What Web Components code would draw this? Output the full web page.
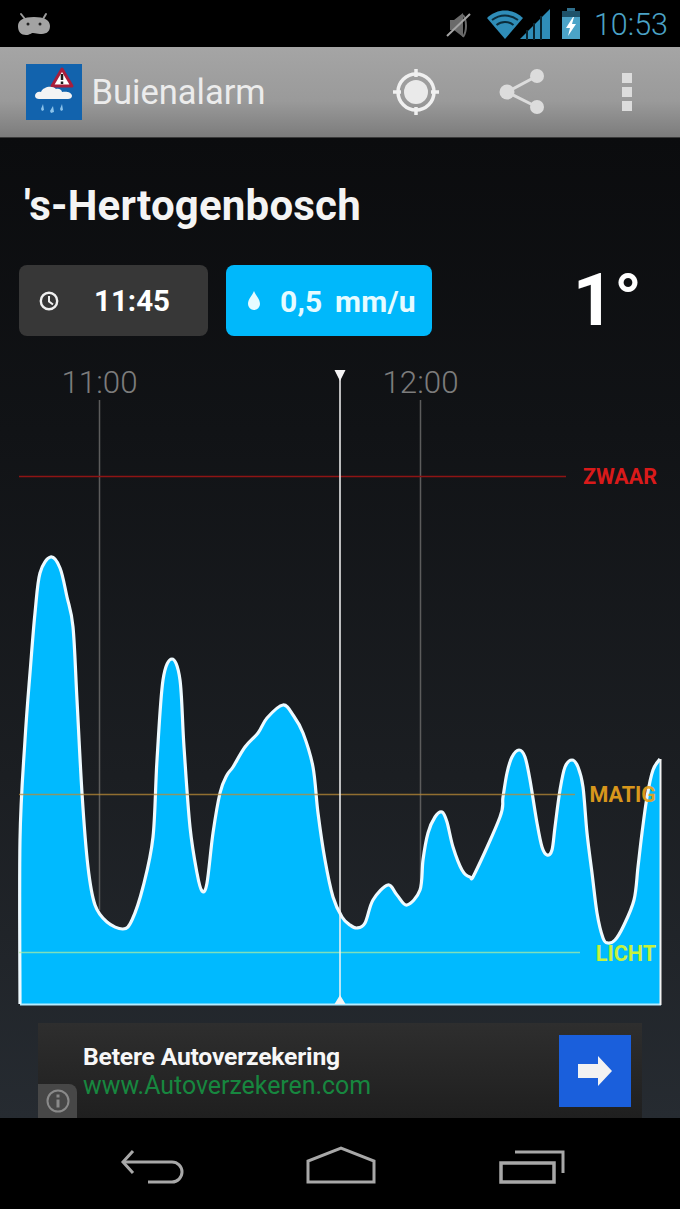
<!DOCTYPE html>
<html>
<head>
<meta charset="utf-8">
<title>Buienalarm</title>
<style>
  html, body { margin: 0; padding: 0; background: #000; }
  body { width: 680px; height: 1209px; overflow: hidden; font-family: Roboto, "Liberation Sans", sans-serif; }
</style>
</head>
<body>
<app-screen>
  <status-bar slot="status" time="10:53"></status-bar>
  <action-bar slot="action" title="Buienalarm"></action-bar>
  <city-title city="'s-Hertogenbosch"></city-title>
  <info-row time="11:45" rain="0,5 mm/u" temp="1°"></info-row>
  <rain-chart></rain-chart>
  <ad-banner slot="ad" headline="Betere Autoverzekering" url="www.Autoverzekeren.com"></ad-banner>
  <nav-bar slot="nav"></nav-bar>
</app-screen>

<script>
class AppScreen extends HTMLElement {
  constructor() {
    super();
    this.attachShadow({ mode: 'open' });
    this.shadowRoot.innerHTML = `
      <style>
        :host { display: flex; flex-direction: column; width: 680px; height: 1209px; }
        main {
          flex: 1;
          display: flex;
          flex-direction: column;
          min-height: 0;
          overflow: hidden;
          background: linear-gradient(#0b0c0e 0%, #111316 30%, #1b1e22 65%, #262b31 100%);
        }
      </style>
      <slot name="status"></slot>
      <slot name="action"></slot>
      <main>
        <slot></slot>
        <slot name="ad"></slot>
      </main>
      <slot name="nav"></slot>
    `;
  }
}

class StatusBar extends HTMLElement {
  constructor() {
    super();
    this.attachShadow({ mode: 'open' });
    this.shadowRoot.innerHTML = `
      <style>
        :host { display: flex; align-items: center; height: 47px; background: #000; padding: 0 12px 0 17px; flex: none; }
        .bugdroid { margin-right: auto; }
        svg { display: block; }
        .mute { margin-right: 14px; }
        .wifi { margin-right: -5px; }
        .signal { margin-right: 10px; }
        .battery { margin-right: 13px; }
        .time { font-size: 30.500px; font-weight: 300; color: #4ba3c7; position: relative; top: 1px; }
      </style>
      <svg class="bugdroid" width="34" height="26" viewBox="0 0 34 26">
        <path d="M4 3 8 8M29 3l-3 5" stroke="#9a9a9a" stroke-width="2" stroke-linecap="round"/>
        <path d="M1 15C1 9 7 6 17 6s16 3 16 9c0 7-5 8-10 8-3 0-4-1-7-1-2 0-3 2-7 2-5 0-8-3-8-9z" fill="#a3a3a3"/>
        <circle cx="11" cy="13" r="1.500" fill="#222"/><circle cx="23" cy="13" r="1.500" fill="#222"/>
      </svg>
      <svg class="mute" width="26" height="30" viewBox="0 0 26 30">
        <path d="M4 11h4l9-7v24L8 21H4z" fill="#6a6a6a"/>
        <path d="M17 6c4 5 4 16 0 22" fill="none" stroke="#6a6a6a" stroke-width="2"/>
        <path d="M1 27 24 5" stroke="#a4a4a4" stroke-width="2"/>
      </svg>
      <svg class="wifi" width="38" height="30" viewBox="0 0 38 30">
        <path d="M1 9C11-1 27-1 37 9L19 30z" fill="#2f8db8"/>
        <path d="M6 11c8-6 18-6 26 0M10.500 16c5-4 12-4 17 0" fill="none" stroke="#0b2c3b" stroke-width="2"/>
      </svg>
      <svg class="signal" width="32" height="32" viewBox="0 0 32 32">
        <path d="M1 31 31 1v30z" fill="#2f8db8"/>
        <path d="M8 32V22M15 32V15M22 32V8" stroke="#0a2530" stroke-width="2"/>
      </svg>
      <svg class="battery" width="20" height="32" viewBox="0 0 20 32">
        <path d="M6 0h8v3H6z" fill="#2f6f8c"/>
        <path d="M1 3h18v6H1z" fill="#1e5269"/>
        <path d="M1 9h18v22H1z" fill="#4ba3c7"/>
        <path d="M12 9 5 20h4l-2 8 8-12h-4l2-7z" fill="#fff"/>
      </svg>
      <span class="time"></span>
    `;
    this.shadowRoot.querySelector('.time').textContent = this.getAttribute('time');
  }
}

class ActionBar extends HTMLElement {
  constructor() {
    super();
    this.attachShadow({ mode: 'open' });
    this.shadowRoot.innerHTML = `
      <style>
        :host {
          display: flex; align-items: center; flex: none; box-sizing: border-box; height: 91px;
          padding-left: 26px;
          background: linear-gradient(#a5a5a5 0%, #9a9a9a 60%, #7c7c7c 100%);
          border-bottom: 1px solid #3a3a3a;
        }
        svg { display: block; flex: none; }
        .title { font-size: 34.500px; color: #ececec; margin-left: 9.500px; flex: 1; }
        .gps { margin-right: 60px; }
        .share { margin-right: 77px; }
        .more { margin-right: 48px; }
      </style>
      <svg width="56" height="56" viewBox="0 0 56 56">
        <rect width="56" height="56" fill="#1263ad"/>
        <path d="M36 5 46 22H26z" fill="#fff" stroke="#a81e3c" stroke-width="3" stroke-linejoin="round"/>
        <path d="M36 10v6M36 17.500v2.500" stroke="#1b1b1b" stroke-width="2.500"/>
        <path d="M9 32c0-3 3-5 6-4 2-5 11-7 15-3 3-1 6 1 6 3 4-1 10 0 10 4 0 2-2 3-4 3H13c-2 0-4-1-4-3z" fill="#f4f4f4"/>
        <path d="M17 40l-2 5 1 2 2-1zM27 42l-3 5 1 2 3-1zM36 40l-2 5 1 2 2-1z" fill="#8cc3ea"/>
      </svg>
      <span class="title"></span>
      <svg class="gps" width="46" height="46" viewBox="0 0 46 46">
        <circle cx="23" cy="23" r="12" fill="#eaeaea"/>
        <circle cx="23" cy="23" r="18" fill="none" stroke="#f0f0f0" stroke-width="3.500"/>
        <path d="M23 0v8M23 38v8M0 23h8M38 23h8" stroke="#f0f0f0" stroke-width="3.500"/>
      </svg>
      <svg class="share" width="46" height="46" viewBox="0 0 46 46">
        <path d="M8 23 38 7M8 23l30 15" stroke="#dcdcdc" stroke-width="3"/>
        <circle cx="8" cy="23" r="7.500" fill="#dcdcdc"/>
        <circle cx="38" cy="7" r="7" fill="#dcdcdc"/>
        <circle cx="38" cy="38" r="7" fill="#dcdcdc"/>
      </svg>
      <svg class="more" width="10" height="40" viewBox="0 0 10 40">
        <rect width="10" height="10" y="1" fill="#dcdcdc"/>
        <rect width="10" height="10" y="15" fill="#dcdcdc"/>
        <rect width="10" height="10" y="29" fill="#dcdcdc"/>
      </svg>
    `;
    this.shadowRoot.querySelector('.title').textContent = this.getAttribute('title');
  }
}

class CityTitle extends HTMLElement {
  constructor() {
    super();
    this.attachShadow({ mode: 'open' });
    this.shadowRoot.innerHTML = `
      <style>
        :host { display: block; flex: none; height: 127px; box-sizing: border-box; padding: 44px 0 0 24px; }
        h1 { margin: 0; font-size: 42px; line-height: 48px; font-weight: 700; color: #f4f4f4; letter-spacing: .2px; }
      </style>
      <h1></h1>
    `;
    this.shadowRoot.querySelector('h1').textContent = this.getAttribute('city');
  }
}

class InfoRow extends HTMLElement {
  constructor() {
    super();
    this.attachShadow({ mode: 'open' });
    this.shadowRoot.innerHTML = `
      <style>
        :host { display: flex; flex: none; height: 71px; padding-left: 19px; gap: 18px; align-items: stretch; }
        .pill { display: flex; align-items: center; box-sizing: border-box; border-radius: 8px; color: #fff; font-weight: 700; font-size: 29.500px; padding-top: 1px; }
        .clock { width: 189px; background: #373737; padding-left: 20px; gap: 35px; }
        .rain { width: 206px; background: #00b8fb; padding-left: 21px; gap: 19px; color: #e6fbff; letter-spacing: .2px; word-spacing: 5px; font-size: 30px; }
        svg { display: block; flex: none; }
        .temp { margin-left: auto; margin-right: 38px; font-size: 72px; line-height: 78px; color: #fff; font-weight: 700; align-self: center; }
      </style>
      <div class="pill clock">
        <svg width="20" height="20" viewBox="0 0 20 20"><circle cx="10" cy="10" r="8.200" fill="none" stroke="#f0f0f0" stroke-width="2.400"/><path d="M10 5v5.500l4 3" fill="none" stroke="#f0f0f0" stroke-width="2"/></svg>
        <span class="t"></span>
      </div>
      <div class="pill rain">
        <svg width="14" height="22" viewBox="0 0 14 22"><path d="M7 1c2 5 6 8 6 13a6 6 0 0 1-12 0C1 9 5 6 7 1z" fill="#e6fbff"/></svg>
        <span class="r"></span>
      </div>
      <span class="temp"></span>
    `;
    this.shadowRoot.querySelector('.t').textContent = this.getAttribute('time');
    this.shadowRoot.querySelector('.r').textContent = this.getAttribute('rain');
    this.shadowRoot.querySelector('.temp').textContent = this.getAttribute('temp');
  }
}

// rain curve traced from the picture, in page coordinates
const RAIN_POINTS = [
  [20,1004],[20,840],[25,740],[30,673],[35,613],[40,573],[50.500,557],[60,568],[67,597],[73,627],
  [77,700],[82,793],[88,867],[95,905],[107,922],[123,929],[132,920],[143,887],[153,837],[157,760],
  [163,680],[172,659],[180,680],[184,747],[190,827],[197,873],[202,891],[207,883],[213,833],[220,793],
  [227,775],[233,767],[245,747],[258,733],[267,718],[283,705],[293,715],[303,733],[313,767],[318,813],
  [325,860],[333,897],[342,917],[350,925],[357,928],[365,923],[373,900],[388,885],[397,895],[407,905],[420,890],
  [423,860],[428,833],[435,817],[442,812],[447,822],[453,847],[462,870],[470,877],[475,873],[500,817],
  [503,797],[507,773],[512,757],[519,750],[525,757],[530,780],[537,823],[542,847],[547,855],[552,850],
  [555,827],[560,790],[565,767],[572,760],[578,767],[583,787],[587,833],[592,873],[597,913],[603,938],
  [608,943],[615,940],[623,927],[634,900],[638,867],[642,833],[647,797],[653,770],[660,759]
];

function smoothPath(pts) {
  let d = `M${pts[0][0]} ${pts[0][1]}`;
  for (let i = 0; i < pts.length - 1; i++) {
    const p0 = pts[i - 1] || pts[i], p1 = pts[i], p2 = pts[i + 1], p3 = pts[i + 2] || p2;
    const c1x = p1[0] + (p2[0] - p0[0]) / 6, c1y = p1[1] + (p2[1] - p0[1]) / 6;
    const c2x = p2[0] - (p3[0] - p1[0]) / 6, c2y = p2[1] - (p3[1] - p1[1]) / 6;
    d += `C${c1x.toFixed(1)} ${c1y.toFixed(1)} ${c2x.toFixed(1)} ${c2y.toFixed(1)} ${p2[0]} ${p2[1]}`;
  }
  return d;
}

class RainChart extends HTMLElement {
  constructor() {
    super();
    this.attachShadow({ mode: 'open' });
    const line = smoothPath(RAIN_POINTS);
    this.shadowRoot.innerHTML = `
      <style>
        :host { display: block; position: relative; flex: none; height: 663px; margin-top: 16px; }
        svg { display: block; position: absolute; inset: 0; }
        span { position: absolute; line-height: 30px; white-space: nowrap; }
        .hour { font-size: 31.300px; font-weight: 300; color: #7c7c7c; top: 16px; transform: translateX(-50%); }
        .level { font-size: 21.500px; font-weight: 700; transform: translateX(-100%); }
      </style>
      <svg width="680" height="663" viewBox="0 352 680 663">
        <path d="M99.500 400V910M420.500 400V890" stroke="#5c5c5c" stroke-width="1.500"/>
        <path d="M19 476.500H566" stroke="#8f1414" stroke-width="1.500"/>
        <path d="${line}V1004H20Z" fill="#00baff"/>
        <path d="${line}" fill="none" stroke="#eefaff" stroke-width="3.200"/>
        <path d="M20 1004.500H661" stroke="#b5ecff" stroke-width="2"/>
        <path d="M20 840V1004" stroke="#eefaff" stroke-width="2"/>
        <path d="M660.500 759V1005" stroke="#f2f2f2" stroke-width="2"/>
        <path d="M19 794.500H575" stroke="#b98a35" stroke-opacity=".75" stroke-width="1.500"/>
        <path d="M19 952.500H580" stroke="#b2f0a0" stroke-opacity=".7" stroke-width="1.500"/>
        <path d="M340 376V1000" stroke="#f4f4f4" stroke-width="1.500"/>
        <path d="M334.500 370h11L340 381zM334.500 1004h11L340 995z" fill="#f4f4f4"/>
      </svg>
      <span class="hour" style="left:99.500px">11:00</span>
      <span class="hour" style="left:420.500px">12:00</span>
      <span class="level" style="left:657px;top:110px;color:#d91a1a">ZWAAR</span>
      <span class="level" style="left:656px;top:428px;color:#e9a21c;opacity:.92">MATIG</span>
      <span class="level" style="left:656px;top:587px;color:#c6f23c">LICHT</span>
    `;
  }
}

class AdBanner extends HTMLElement {
  constructor() {
    super();
    this.attachShadow({ mode: 'open' });
    this.shadowRoot.innerHTML = `
      <style>
        :host {
          display: flex; flex: none; position: relative; box-sizing: border-box; height: 95px; margin: 8px 38px 0;
          padding-left: 45px; align-items: flex-start; background: linear-gradient(#2e2e2e, #1f1f1f);
        }
        .copy { flex: 1; padding-top: 19px; }
        .head { font-size: 24.700px; line-height: 29px; font-weight: 700; color: #f7f7f7; letter-spacing: -.2px; }
        .url { font-size: 24.900px; line-height: 29px; color: #17873f; }
        .go { width: 72px; height: 72px; margin: 12px 11px 0 0; background: #1a5fdc; display: flex; align-items: center; justify-content: center; }
        .info { position: absolute; left: 0; bottom: 0; width: 39px; height: 34px; background: #474747; border-top-right-radius: 8px; display: flex; align-items: center; justify-content: center; }
        svg { display: block; }
      </style>
      <div class="copy">
        <div class="head"></div>
        <div class="url"></div>
      </div>
      <div class="go">
        <svg width="34" height="30" viewBox="0 0 34 30"><path d="M0 8h20V0l14 15-14 15v-8H0z" fill="#f2f2f2"/></svg>
      </div>
      <div class="info">
        <svg width="24" height="24" viewBox="0 0 24 24"><circle cx="12" cy="12" r="10.500" fill="none" stroke="#8a8a8a" stroke-width="2"/><path d="M12 5.500v3M12 10.500v8" stroke="#8a8a8a" stroke-width="3"/></svg>
      </div>
    `;
    this.shadowRoot.querySelector('.head').textContent = this.getAttribute('headline');
    this.shadowRoot.querySelector('.url').textContent = this.getAttribute('url');
  }
}

class NavBar extends HTMLElement {
  constructor() {
    super();
    this.attachShadow({ mode: 'open' });
    this.shadowRoot.innerHTML = `
      <style>
        :host { display: flex; flex: none; height: 91px; background: #000; padding: 28px 0 0 120px; box-sizing: border-box; align-items: flex-start; }
        svg { display: block; flex: none; }
        .home { margin-left: 122px; }
        .recent { margin-left: 123px; }
      </style>
      <svg class="back" width="64" height="38" viewBox="0 0 64 38">
        <path d="M3 16H52a10 10 0 0 1 0 20H28" fill="none" stroke="#a8a8a8" stroke-width="3"/>
        <path d="M13 5 3 16l10 11" fill="none" stroke="#a8a8a8" stroke-width="3"/>
      </svg>
      <svg class="home" width="70" height="38" viewBox="0 0 70 38">
        <path d="M2 36V15L35 2l33 13v21z" fill="none" stroke="#a8a8a8" stroke-width="3"/>
      </svg>
      <svg class="recent" width="66" height="38" viewBox="0 0 66 38">
        <path d="M2 17h53v19H2z" fill="none" stroke="#a8a8a8" stroke-width="3.500"/>
        <path d="M16 6h48v21" fill="none" stroke="#a8a8a8" stroke-width="3"/>
      </svg>
    `;
  }
}

customElements.define('app-screen', AppScreen);
customElements.define('status-bar', StatusBar);
customElements.define('action-bar', ActionBar);
customElements.define('city-title', CityTitle);
customElements.define('info-row', InfoRow);
customElements.define('rain-chart', RainChart);
customElements.define('ad-banner', AdBanner);
customElements.define('nav-bar', NavBar);
</script>
</body>
</html>
